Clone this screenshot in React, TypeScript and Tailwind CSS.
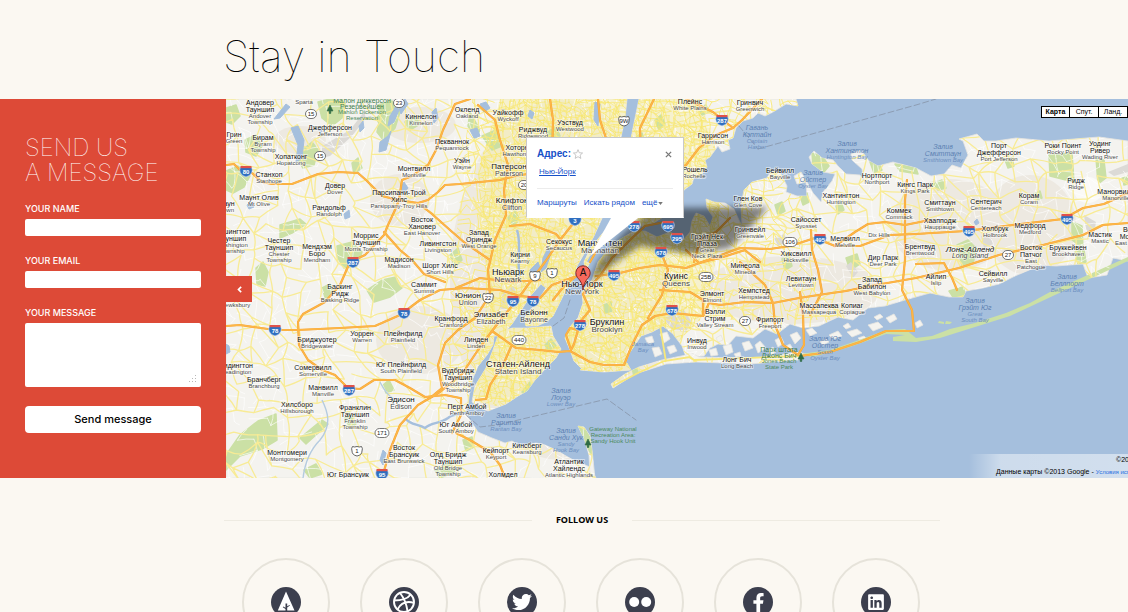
import React from "react";
import { FaTwitter, FaFacebookF, FaLinkedin } from "react-icons/fa";

type Kind = "town" | "city" | "metro" | "water" | "park" | "region";
type Label = [number, number, string, string, Kind?];

const LABELS: Label[] = [
  [260, 102, "Андовер|Тауншип", "Andover|Township"],
  [304, 102, "", "Sparta"],
  [421, 116, "Киннелон", "Kinnelon"],
  [330, 127, "Джефферсон", "Jefferson"],
  [234, 134, "Грин", "Green"],
  [263, 137, "Бирам", "Byram|Township"],
  [291, 156, "Хопатконг", "Hopatcong"],
  [452, 141, "Пекваннок", "Pequannock"],
  [269, 174, "Станхоп", "Stanhope"],
  [414, 168, "Монтвилл", "Montville"],
  [335, 185, "Довер", "Dover"],
  [259, 197, "Маунт Олив", "Mt Olive"],
  [399, 192, "Парсипани-Трой|Хилс", "Parsippany-Troy Hills"],
  [329, 207, "Рандольф", "Randolph"],
  [422, 219, "Восток|Хановер", "East Hanover"],
  [366, 235, "Моррис|Тауншип", "Morris Township"],
  [227, 203, "Таун", "Town"],
  [232, 231, "Вашингтон|Тауншип", "Washington|Township"],
  [279, 240, "Честер|Тауншип", "Chester|Township"],
  [317, 246, "Мендхэм|Боро", "Mendham"],
  [438, 243, "Ливингстон", "Livingston"],
  [399, 259, "Мадисон", "Madison"],
  [440, 265, "Шорт Хилс", "Short Hills"],
  [424, 284, "Саммит", "Summit"],
  [340, 286, "Баскинг|Ридж", "Basking Ridge"],
  [236, 305, "", "Tewksbury"],
  [362, 333, "Уоррен", "Warren"],
  [403, 333, "Плейнфилд", "Plainfield"],
  [451, 318, "Кранфорд", "Cranford"],
  [317, 339, "Бриджуотер", "Bridgewater"],
  [313, 367, "Сомервилл", "Somerville"],
  [401, 364, "Юг Плейнфилд", "South Plainfield"],
  [236, 365, "Ридингтон", "Readington"],
  [264, 379, "Бранчберг", "Branchburg"],
  [323, 387, "Манвилл", "Manville"],
  [401, 399, "Эдисон", "Edison", "city"],
  [297, 404, "Хилсборо", "Hillsborough"],
  [355, 407, "Франклин|Тауншип", "Franklin|Township"],
  [404, 447, "Восток|Брансуик", "East Brunswick"],
  [448, 454, "Олд Бридж|Тауншип", "Old Bridge|Township"],
  [287, 452, "Монтгомери", "Montgomery"],
  [348, 474, "Юг Брансуик", ""],
  [456, 424, "Юг Амбой", "South Amboy"],
  [467, 406, "Перт Амбой", "Perth Amboy"],
  [458, 370, "Вудбридж|Тауншип", "Woodbridge|Township"],
  [467, 109, "Окленд", "Oakland"],
  [508, 112, "Уайкофф", "Wyckoff"],
  [570, 122, "Уэствуд", "Westwood"],
  [533, 129, "Риджвуд", "Ridgewood"],
  [517, 147, "Хоторн", "Hawthorne"],
  [462, 160, "Уэйн", "Wayne"],
  [509, 166, "Патерсон", "Paterson", "city"],
  [512, 200, "Клифтон", "Clifton", "city"],
  [479, 232, "Запад|Ориндж", "West Orange"],
  [559, 241, "Секокус", "Secaucus"],
  [520, 254, "Кирни", "Kearny"],
  [508, 272, "Ньюарк", "Newark", "metro"],
  [600, 243, "Манхэттен", "Manhattan", "metro"],
  [676, 276, "Куинс", "Queens", "metro"],
  [582, 284, "Нью-Йорк", "New York", "metro"],
  [468, 295, "Юнион", "Union", "city"],
  [491, 314, "Элизабет", "Elizabeth", "city"],
  [534, 312, "Бейонн", "Bayonne", "city"],
  [607, 322, "Бруклин", "Brooklyn", "metro"],
  [476, 339, "Линден", "Linden"],
  [518, 364, "Статен-Айленд", "Staten Island", "metro"],
  [643, 344, "", "Jamaica|Bay", "water"],
  [561, 390, "Залив|Лоуэр", "Lower Bay", "water"],
  [506, 415, "Залив|Раритан", "Raritan Bay", "water"],
  [566, 430, "Залив|Санди Хук", "Sandy|Hook Bay", "water"],
  [527, 445, "Кинсберг", "Keansburg"],
  [496, 450, "Кейпорт", "Keyport"],
  [503, 474, "Холмдел", ""],
  [569, 461, "Атлантик|Хайлендс", "Atlantic Highlands"],
  [690, 101, "Плейнс", "White Plains"],
  [750, 102, "Гринвич", "Greenwich"],
  [757, 127, "Гавань|Кэптайн", "Captain|Harbor", "water"],
  [713, 135, "Гаррисон", "Harrison"],
  [847, 143, "Залив|Хантингтон", "Huntington Bay", "water"],
  [687, 169, "Нью-Рошель", "New Rochelle"],
  [780, 170, "Бейвилл", "Bayville"],
  [813, 172, "Залив|Ойстер", "Oyster Bay", "water"],
  [877, 175, "Нортпорт", "Northport"],
  [915, 184, "Кингс Парк", "Kings Park"],
  [748, 198, "Глен Ков", "Glen Cove"],
  [841, 195, "Хантингтон", "Huntington"],
  [899, 210, "Коммек", "Commack"],
  [806, 219, "Сайоссет", "Syosset"],
  [750, 229, "Гринвейл", "Greenvale"],
  [845, 238, "Мелвилл", "Melville"],
  [879, 235, "", "Dix Hills"],
  [707, 236, "Грэйт Нек|Плаза", "Great|Neck Plaza"],
  [796, 253, "Хиксвилл", "Hicksville"],
  [883, 257, "Дир Парк", "Deer Park"],
  [920, 246, "Брентвуд", "Brentwood"],
  [745, 265, "Минеола", "Mineola"],
  [801, 278, "Левитаун", "Levittown"],
  [872, 279, "Запад|Бабилон", "West Babylon"],
  [754, 290, "Хемпстед", "Hempstead"],
  [712, 293, "Элмонт", "Elmont"],
  [715, 311, "Вэлли|Стрим", "Valley Stream"],
  [770, 319, "Фрипорт", "Freeport"],
  [819, 305, "Массапеква", "Massapequa"],
  [852, 305, "Копиаг", "Copiague"],
  [697, 340, "Инвуд", "Inwood"],
  [737, 359, "Лонг Бич", "Long Beach"],
  [779, 349, "Парк штата|Джонс Бич", "Jones Beach|State Park", "park"],
  [825, 338, "Залив Юг|Ойстер", "South|Oyster Bay", "water"],
  [943, 146, "Залив|Смиттаун", "Smithtown Bay", "water"],
  [999, 145, "Порт|Джефферсон", "Port Jefferson"],
  [1063, 145, "Роки Поинт", "Rocky Point"],
  [1100, 143, "Уодинг|Ривер", "Wading River"],
  [1076, 180, "Ридж", "Ridge"],
  [1116, 191, "Манорвилл", "Manorville"],
  [1029, 195, "Корам", "Coram"],
  [940, 202, "Смиттаун", "Smithtown"],
  [986, 201, "Сентерич", "Centereach"],
  [940, 220, "Хаапподж", "Hauppauge"],
  [995, 228, "Холбрук", "Holbrook"],
  [1030, 225, "Медфорд", "Medford"],
  [1100, 234, "Мастик", "Mastic"],
  [1134, 229, "Восток|Моричес", "East Moriches"],
  [970, 249, "Лонг-Айленд", "Long Island", "region"],
  [1031, 247, "Восток|Патчог", "East|Patchogue"],
  [1068, 247, "Бруккейвен", "Brookhaven"],
  [993, 273, "Сейвилл", "Sayville"],
  [936, 276, "Айлип", "Islip"],
  [1067, 276, "Залив|Беллпорт", "Bellport Bay", "water"],
  [975, 300, "Залив|Грэйт Юг", "Great|South Bay", "water"],
  [362, 100, "Малон Диккерсон|Резервейшен", "Mahlon Dickerson|Reservation", "park"],
  [613, 429, "", "Gateway National|Recreation Area:|Sandy Hook Unit", "park"],
];

const INTERSTATES: [number, number, string][] = [
  [246, 171, "80"], [353, 262, "287"], [404, 313, "78"], [275, 330, "78"], [349, 390, "287"],
  [382, 474, "95"], [513, 301, "95"], [533, 301, "78"], [580, 325, "278"], [672, 310, "678"],
  [614, 275, "495"], [634, 226, "278"], [668, 226, "695"], [677, 238, "295"], [661, 252, "678"],
  [722, 120, "287"], [820, 239, "495"], [969, 231, "495"], [1067, 219, "495"], [575, 220, "3"],
];

const OVALS: [number, number, string][] = [
  [311, 114, "15"], [320, 156, "15"], [399, 103, "23"], [382, 433, "171"], [519, 340, "440"],
  [706, 277, "25B"], [790, 242, "106"], [745, 321, "27"], [1008, 255, "27"], [524, 185, "20"],
];

const US_ROUTES: [number, number, string][] = [
  [357, 451, "1"], [535, 276, "9"], [552, 273, "1"], [488, 298, "22"], [624, 121, "9W"],
];

const LAND = [
  "226,99 627,99 625,118 621,137 612,180 604,214 594,236 584,254 577,266 574,278 566,290 561,300 553,316 546,322 537,326 526,326 524,318 532,308 541,296 546,288 541,284 531,295 520,312 512,324 505,332 500,336 494,336 493,345 487,355 478,366 473,378 470,390 468,404 466,412 470,420 478,432 492,438 505,443 512,441 520,446 536,443 545,445 556,450 566,456 577,462 590,467 596,478 226,478",
  "499,333 512,328 528,328 551,326 553,336 561,349 556,358 546,368 535,380 527,391 518,396 506,404 488,411 480,408 472,402 475,386 486,368 493,350",
  "639,99 796,99 798,106 786,104 773,112 765,116 758,113 753,118 743,121 736,128 733,138 728,140 730,149 722,152 718,146 710,157 705,160 707,167 699,178 694,177 692,184 684,190 678,204 668,214 655,222 645,227 634,224 625,226 615,234 600,247 590,262 586,270 584,262 590,249 602,234 617,217 624,190 629,150 633,128",
  "598,262 606,252 619,240 634,231 645,231 657,237 670,232 684,239 690,232 692,221 696,213 704,216 710,226 713,217 707,208 706,199 714,202 725,203 734,209 739,220 742,226 741,205 744,190 752,182 767,178 771,171 780,172 787,186 786,192 797,196 807,196 806,182 797,184 794,176 801,172 807,182 813,193 821,202 823,192 832,181 835,174 823,172 812,164 809,157 814,151 822,158 833,160 838,166 846,174 860,175 864,181 862,169 852,160 851,154 861,150 869,161 878,166 893,162 916,168 931,176 944,174 952,165 961,168 968,155 963,141 959,139 977,134 984,141 996,141 1016,138 1049,141 1099,137 1128,141 1128,261 1113,258 1107,275 1088,278 1083,264 1056,266 1041,265 1015,276 999,284 983,288 966,291 963,297 949,297 930,293 905,300 885,306 868,308 853,320 838,317 819,326 803,328 790,324 777,334 765,329 753,338 736,336 728,345 718,344 710,348 704,356 686,357 682,346 673,334 663,326 652,332 641,336 630,352 624,367 605,370 582,369 574,361 570,350 565,338 569,328 578,318 583,303 582,292 592,280",
  "611,384 625,374 639,367 662,360 686,355 690,352 699,357 740,358 765,357 798,352 806,354 798,360 750,364 696,362 666,364 635,374 613,388",
  "578,426 584,427 590,436 592,450 595,478 590,478 589,455 584,438",
  "585,365 627,363 631,370 604,372 580,370",
];

const ISLETS = [
  "645,338 652,336 654,342 648,344", "660,334 667,332 670,339 664,343", "652,348 659,347 662,354 655,357", "667,347 674,345 677,351 670,354",
  "709,350 716,348 718,355 711,356", "723,346 731,344 733,352 726,355", "742,343 749,341 753,348 745,351", "755,345 760,341 766,348 758,353",
  "775,340 781,337 784,343 778,347", "790,335 797,332 801,338 795,344", "806,330 812,328 817,333 810,336", "829,335 838,331 842,336 833,339",
  "847,332 857,329 862,333 852,337", "868,325 878,322 883,327 873,331", "886,318 894,314 897,319 890,323", "915,323 920,320 923,325 917,328",
  "716,338 721,335 723,340 718,342", "734,354 740,352 741,356 736,357", "768,350 773,347 776,352 771,355", "786,346 790,344 793,349 788,351",
  "820,342 826,339 829,342 823,345", "843,326 848,323 851,327 846,329", "858,338 864,336 866,338 860,340", "874,317 880,314 883,317 877,320",
];

const BARRIERS = [
  "800,354 830,350 862,339 886,330 905,329 916,338 932,336 950,329 975,323 1006,313 1030,303 1050,292 1070,283 1090,274 1128,257 1128,261 1094,277 1070,288 1040,302 1010,316 975,327 940,338 916,342 893,341 893,337 905,335 886,334 850,347 812,357",
  "939,321 944,322 944,324 938,323", "946,321 952,322 950,324 945,324",
];

const PARKS = [
  "226,171 238,166 250,176 244,187 233,193 226,190", "226,108 236,105 240,116 232,124 226,122", "245,140 256,135 262,146 256,156 246,152",
  "318,102 330,99 345,103 342,118 332,126 322,118", "378,105 392,101 400,112 395,128 384,141 377,132 380,118", "300,152 312,142 318,150 314,165 303,168 298,160",
  "352,163 358,158 362,168 354,174", "376,118 382,113 388,120 382,128", "405,122 415,116 420,124 410,130", "337,246 352,242 362,252 357,266 344,268 338,258",
  "280,225 300,219 306,224 292,233 280,238", "256,268 263,262 268,272 265,286 257,284", "367,290 382,280 396,277 402,288 390,297 374,302", "322,288 330,284 334,292 326,300",
  "226,455 240,435 258,421 276,414 277,440 262,449 240,456 226,470", "300,438 322,420 328,424 306,444", "345,418 350,412 356,424 350,428", "304,470 316,464 322,474 310,478",
  "383,385 389,380 394,390 386,393", "435,470 450,462 455,472 440,478", "463,440 472,437 474,447 466,451", "450,255 458,248 462,260 455,267",
  "470,112 480,130 476,138 468,126", "482,136 496,130 502,146 492,150", "548,132 556,126 560,136 552,142", "508,218 514,210 520,220 512,226",
  "522,392 530,382 538,385 527,398", "545,345 551,339 556,346 549,352", "629,352 634,350 640,374 634,377", "604,305 611,302 612,311 605,313", "672,280 679,277 684,284 676,287",
  "812,153 823,157 829,166 824,172 813,167", "870,162 878,161 882,170 874,173", "895,164 916,168 918,174 900,171", "724,190 731,194 729,202 722,201",
  "775,205 782,202 785,211 778,215", "800,196 807,193 809,202 803,205", "836,206 841,202 844,210 838,214", "782,259 789,255 792,266 785,270", "846,258 857,254 860,264 850,270",
  "957,245 968,240 977,249 973,263 962,266", "1049,155 1072,153 1074,182 1050,176", "1096,158 1104,160 1106,178 1098,184", "1072,222 1082,226 1083,248 1072,240", "1122,178 1128,176 1128,184 1124,185",
  "963,287 966,297 953,297 949,291", "1034,194 1040,191 1042,198 1036,200", "578,426 584,427 591,440 592,456 588,448", "894,338 910,337 914,342 896,342", "1075,252 1084,250 1086,262 1078,264",
  "618,240 622,230 625,232 621,244", "637,136 642,133 645,142 639,146", "655,120 661,115 665,124 659,130", "698,108 706,105 709,112 702,115", "934,184 942,180 946,188 938,190", "1005,160 1012,158 1014,166 1008,168",
];

const LAKES = [
  "291,128 298,126 304,140 302,158 296,162 298,145", "274,119 286,104 290,107 280,118", "390,116 396,106 399,110 394,122 388,126", "398,105 405,99 408,104 401,114", "380,142 388,136 391,131 386,150 379,152",
  "401,187 404,182 408,188 403,194", "432,112 436,108 438,118 434,123", "470,130 477,128 480,136 474,138", "226,344 229,346 230,352 226,354", "247,205 250,202 254,207 249,209", "359,126 363,121 364,128 360,132",
  "344,214 349,210 350,217 345,219", "480,104 486,102 490,108 484,112", "556,143 562,140 565,146 558,149", "595,102 600,104 598,126 594,120", "530,110 534,113 532,119 528,116", "380,460 383,450 386,453 383,465",
  "974,222 977,219 979,223 976,225", "318,130 321,126 322,132", "543,258 548,248 551,253 546,268 541,272", "530,270 538,262 540,268 532,280", "606,240 612,228 616,226 610,240",
];

const AIRFIELDS = [
  "322,146 350,130 364,112 366,118 352,136 330,156 322,158", "503,292 514,286 517,298 508,312 500,308", "664,318 684,310 691,321 686,332 672,330", "851,262 858,272 853,278 846,266",
  "1108,172 1128,164 1128,172 1114,176", "981,236 990,234 993,244 984,248", "774,238 784,234 788,242 778,246", "1084,215 1096,222 1094,234 1086,230",
];

const HIGHWAYS = [
  "226,165 234,164 240,170 252,173 262,182 272,184 292,184 318,174 338,172 358,173 366,180 372,186 382,196 398,200 418,203 428,200 438,192 445,185 460,184 480,182 500,180 515,176 540,172 580,190 612,200",
  "470,99 455,104 450,115 443,130 436,150 428,165 412,176 402,180 399,200 395,210 388,225 384,235 365,255 350,262 340,285 325,302 303,314 298,322 299,345 308,360 322,370 335,375 348,388 360,389 374,380 395,380 410,388 425,397 445,395 460,398",
  "384,232 400,250 412,260 424,274 445,282", "418,203 432,214 450,230 465,243 490,260",
  "226,326 240,325 275,330 297,330 340,328 375,326 400,315 420,300 440,290 465,288 500,290 520,296 540,298 552,285 574,277",
  "382,478 390,450 400,425 418,405 440,392 462,374 478,350 492,331 502,318 517,300 530,282 545,262 560,240 580,215 600,180 610,150 600,120 598,99",
  "430,398 442,388 438,365 445,343 458,330 475,318 490,295 488,270 495,240 506,215 504,190 508,165 500,140 495,120 478,105",
  "492,331 516,348 540,350 558,352 570,351 590,362 604,365 624,365 632,345 642,325 655,316 672,313 703,316 709,303 720,305 745,302 773,303 799,298 825,294 846,291 870,286 916,278 959,268 999,255 1043,245 1083,235 1103,225 1128,223",
  "476,400 486,399 490,385 503,365 511,347", "571,350 566,335 570,328 578,330 574,344 571,350", "575,328 590,310 583,294 600,276 612,258 630,240 645,226 665,222",
  "596,276 620,273 640,268 660,265 686,268 702,262 740,248 770,249 790,246 815,238 835,246 860,246 890,235 916,234 966,231 1013,225 1063,219 1083,208 1104,204 1128,193",
  "686,250 699,263 720,258 745,250 752,256 760,262", "835,246 855,232 868,224 885,222 905,225 930,220",
  "811,230 812,250 818,270 822,292 810,315", "740,262 765,285 773,303 775,325 783,345 798,355 804,345 803,315 800,292", "800,356 830,352 860,342 886,331 914,331 912,310 902,290 905,260 905,200 907,180",
  "686,99 713,112 733,128 742,120 762,99", "686,165 699,148 716,135 733,128", "625,222 650,190 670,175 686,165", "661,252 668,270 662,295 648,318", "654,99 640,128 641,160 635,200 630,228",
  "550,99 553,120 552,160 560,190 572,215", "456,433 470,440 490,452 500,465 505,478", "510,226 530,224 556,234 566,246", "590,262 604,238 622,216", "461,398 461,415 452,433", "456,288 480,278 512,282 540,280",
  "916,264 944,263 952,278 957,290", "660,290 690,292 703,300 703,316", "553,300 565,285 578,275", "694,262 700,240 716,232 730,218",
];

const BORDERS = ["758,149 916,105 936,99", "466,415 480,427 497,425 607,399 636,420", "553,326 564,318 570,300", "739,126 758,149"];

function seeded(seed: number) {
  let s = seed;
  return () => {
    s = (s * 1664525 + 1013904223) % 4294967296;
    return s / 4294967296;
  };
}

/** Builds a loose mesh of local streets: jittered grid nodes joined to their neighbours. */
function streets(x0: number, y0: number, x1: number, y1: number, step: number, keep: number, seed: number) {
  const rnd = seeded(seed);
  const cols = Math.ceil((x1 - x0) / step) + 1;
  const rows = Math.ceil((y1 - y0) / step) + 1;
  const pts: [number, number][][] = [];
  for (let r = 0; r < rows; r++) {
    pts.push([]);
    for (let c = 0; c < cols; c++) {
      pts[r].push([x0 + c * step + (rnd() - 0.5) * step * 0.9, y0 + r * step + (rnd() - 0.5) * step * 0.9]);
    }
  }
  let d = "";
  const join = (a: [number, number], b: [number, number]) => {
    const mx = (a[0] + b[0]) / 2 + (rnd() - 0.5) * step * 0.3;
    const my = (a[1] + b[1]) / 2 + (rnd() - 0.5) * step * 0.3;
    d += `M${a[0].toFixed(1)} ${a[1].toFixed(1)}Q${mx.toFixed(1)} ${my.toFixed(1)} ${b[0].toFixed(1)} ${b[1].toFixed(1)}`;
  };
  for (let r = 0; r < rows; r++) {
    for (let c = 0; c < cols; c++) {
      if (c + 1 < cols && rnd() < keep) join(pts[r][c], pts[r][c + 1]);
      if (r + 1 < rows && rnd() < keep) join(pts[r][c], pts[r + 1][c]);
      if (r + 1 < rows && c + 1 < cols && rnd() < keep * 0.3) join(pts[r][c], pts[r + 1][c + 1]);
    }
  }
  return d;
}

const RURAL = streets(220, 92, 1140, 486, 17, 0.78, 7);
const LANES = streets(220, 92, 1140, 486, 11, 0.4, 21);
const SUBURB = streets(440, 92, 850, 420, 9, 0.66, 11);
const DENSE = streets(480, 92, 720, 420, 5, 0.7, 5);

const SIZES: Record<Kind, [number, number, number]> = {
  town: [7, 6, 7],
  city: [8, 7, 8],
  metro: [9, 8, 8],
  water: [7, 6, 7],
  park: [7, 6, 6],
  region: [8, 7, 7],
};

function PlaceLabel({ label }: { label: Label }) {
  const [x, y, local, latin, kind = "town"] = label;
  const [big, small, leading] = SIZES[kind];
  const top = local ? local.split("|") : [];
  const bottom = latin ? latin.split("|") : [];
  const tone = kind === "water" ? "#5c7fb2" : kind === "park" ? "#3e7d50" : "#111111";
  const soft = kind === "water" ? "#6d8fc0" : kind === "park" ? "#4c8a5c" : "#4a4a4a";
  const slant = kind === "water" || kind === "region" ? "italic" : "normal";
  const halo = kind === "water" || kind === "park" ? "none" : "#ffffff";
  return (
    <g textAnchor="middle" fontStyle={slant} stroke={halo} strokeWidth={1.5} strokeOpacity={0.6} paintOrder="stroke">
      {top.map((t, i) => (
        <text key={"t" + i} x={x} y={y + 3 + i * leading} fontSize={big} fill={tone}>
          {t}
        </text>
      ))}
      {bottom.map((t, i) => (
        <text key={"b" + i} x={x} y={y + 2 + top.length * leading + i * 6} fontSize={small} fill={soft}>
          {t}
        </text>
      ))}
    </g>
  );
}

function Tree({ x, y }: { x: number; y: number }) {
  return <path d={`M${x} ${y - 4}l3 6h-2.2v2.4h-1.6v-2.4h-2.2z`} fill="#2f6b45" stroke="#2f6b45" strokeWidth={0.6} />;
}

function MapCanvas() {
  return (
    <svg
      viewBox="226 99 902 379"
      preserveAspectRatio="xMinYMin slice"
      className="absolute inset-0 h-full w-full font-['Liberation_Sans',sans-serif]"
      role="img"
      aria-label="Нью-Йорк"
    >
      <defs>
        <clipPath id="land">
          {LAND.map((p) => <polygon key={p} points={p} />)}
        </clipPath>
        <clipPath id="urban">
          <path d="M500 99H700L716 150 720 240 704 316 680 340 560 420 470 400 482 330 490 290 482 240 478 170z" />
        </clipPath>
        <clipPath id="suburb">
          <path d="M470 99H800V260L850 320H690L560 420 440 400 450 300z" />
        </clipPath>
        <filter id="soft" x="-20%" y="-20%" width="140%" height="140%">
          <feGaussianBlur stdDeviation="3" />
        </filter>
      </defs>
      <rect x="226" y="99" width="902" height="379" fill="#a5bfdd" />
      <g fill="#f4f3ef" stroke="#e6e4df" strokeWidth={0.8} strokeLinejoin="round">
        {LAND.map((p) => <polygon key={p} points={p} />)}
        {ISLETS.map((p) => <polygon key={p} points={p} />)}
      </g>
      <g fill="#cbe0a5">
        {BARRIERS.map((p) => <polygon key={p} points={p} />)}
      </g>
      <g clipPath="url(#land)">
        <g fill="#ede9e1">
          <ellipse cx="300" cy="140" rx="26" ry="14" />
          <ellipse cx="420" cy="125" rx="36" ry="18" />
          <ellipse cx="400" cy="200" rx="30" ry="26" />
          <ellipse cx="420" cy="340" rx="44" ry="34" />
          <ellipse cx="790" cy="290" rx="90" ry="34" />
          <ellipse cx="560" cy="280" rx="110" ry="180" />
          <ellipse cx="950" cy="225" rx="60" ry="46" />
          <ellipse cx="1030" cy="225" rx="46" ry="50" />
        </g>
        <path clipPath="url(#urban)" d="M440 92H740V430H440z" fill="#f8f0a6" opacity="0.45" />
        <g fill="#cbe0a5">
          {PARKS.map((p) => <polygon key={p} points={p} strokeLinejoin="round" stroke="#cbe0a5" strokeWidth={1.5} />)}
        </g>
        <g fill="#dcdad6">
          {AIRFIELDS.map((p) => <polygon key={p} points={p} />)}
        </g>
        <ellipse cx="1088" cy="190" rx="14" ry="13" fill="#fbfaf7" />
        <g fill="none" strokeLinecap="round">
          <path d={LANES} stroke="#ffffff" strokeWidth={0.8} opacity="0.8" />
          <path d={RURAL} stroke="#f8eb95" strokeWidth={1.3} />
          <path d={SUBURB} clipPath="url(#suburb)" stroke="#f9ea80" strokeWidth={1} />
          <path d={DENSE} clipPath="url(#urban)" stroke="#f7e770" strokeWidth={0.7} />
        </g>
      </g>
      <g fill="#a5bfdd" stroke="#a5bfdd" strokeWidth={1} strokeLinejoin="round">
        {LAKES.map((p) => <polygon key={p} points={p} />)}
      </g>
      <path
        d="M470 411C462 416 455 412 448 418 440 424 432 422 425 428 418 424 410 425 405 418M520 276C516 262 522 245 517 230M588 262C600 240 610 225 618 210"
        fill="none"
        stroke="#a5bfdd"
        strokeWidth={2.4}
      />
      <path
        d="M394 399C388 396 384 390 380 382M322 400C328 412 332 425 320 440 310 450 305 462 303 478"
        fill="none"
        stroke="#b4cbe0"
        strokeWidth={1.4}
      />
      <path d="M689 357L694 360 800 356M613 386L640 372 664 361 690 357M660 325L666 362" fill="none" stroke="#f7e77a" strokeWidth={1.8} />
      <g fill="none" strokeLinejoin="round" strokeLinecap="round">
        {HIGHWAYS.map((p) => <polyline key={p} points={p} stroke="#f6a534" strokeWidth={2.2} />)}
        {HIGHWAYS.map((p) => <polyline key={p} points={p} stroke="#fdb648" strokeWidth={1.4} />)}
        {BORDERS.map((p) => <polyline key={p} points={p} stroke="#8d9db3" strokeWidth={1} strokeDasharray="6 3" />)}
      </g>
      <polygon
        points="588,284 598,262 622,234 652,208 768,207 752,226 730,248 690,254 640,246 616,262"
        fill="#000000"
        opacity="0.48"
        filter="url(#soft)"
      />
      {OVALS.map(([x, y, n]) => (
        <g key={n + x}>
          <rect x={x - (n.length > 2 ? 7 : 5.5)} y={y - 4.5} width={n.length > 2 ? 14 : 11} height="9" rx="4.5" fill="#fff" stroke="#555" strokeWidth={0.8} />
          <text x={x} y={y + 2} fontSize={6} textAnchor="middle" fill="#222">{n}</text>
        </g>
      ))}
      {US_ROUTES.map(([x, y, n]) => (
        <g key={n + x}>
          <path d={`M${x - 4.5} ${y - 4.5}q2 1 4.5 0q2.500 1 4.500 0q1.500 2 .5 4.500q0 4-5 5q-5-1-5-5q-1-2.500.5-4.500z`} fill="#fff" stroke="#555" strokeWidth={0.9} />
          <text x={x} y={y + 2} fontSize={6} textAnchor="middle" fill="#222">{n}</text>
        </g>
      ))}
      {INTERSTATES.map(([x, y, n]) => (
        <g key={n + x + "-" + y}>
          <path d={`M${x - 5.5} ${y - 4}h11q1.500 3 .3 5.500q-1.500 3.500-5.800 4.500q-4.300-1-5.800-4.500q-1.200-2.500.3-5.500z`} fill="#2f6fc0" stroke="#dfe8f5" strokeWidth={0.6} />
          <path d={`M${x - 5.5} ${y - 5}h11v2.200h-11z`} fill="#e0524a" />
          <text x={x} y={y + 3} fontSize={6} fontWeight="bold" textAnchor="middle" fill="#fff">{n}</text>
        </g>
      ))}
      {LABELS.map((l) => <PlaceLabel key={l[0] + "-" + l[1]} label={l} />)}
      <Tree x={330} y={109} />
      <Tree x={588} y={443} />
      <Tree x={801} y={357} />
      <polygon points="611,218 638,218 590,256" fill="#ffffff" />
      <path d="M583 290c-.6-7-3-9.500-5.600-12.500a7.200 7.200 0 1 1 11.200 0c-2.600 3-5 5.500-5.600 12.500z" fill="#f8695c" stroke="#7d1c16" strokeWidth={0.9} />
      <text x="583" y="276" fontSize={10} textAnchor="middle" fill="#111">A</text>
    </svg>
  );
}

function InfoWindow() {
  return (
    <div className="absolute left-[300px] top-[38px] w-[158px] border border-[#c9c9c9] border-b-white bg-white px-[10px] pb-2 pt-2 font-['Liberation_Sans',sans-serif] text-[8px] leading-[12px] text-[#1550c8]">
      <div className="flex items-center">
        <h3 className="text-[10px] font-bold leading-[16px]">Адрес:</h3>
        <svg viewBox="0 0 12 12" className="ml-0.5 size-[10px]" fill="none" stroke="#b5b5b5" strokeWidth="0.9" aria-hidden="true">
          <path d="M6 .8l1.500 3.700 4 .3-3 2.600.9 3.900L6 9.200l-3.400 2.100.9-3.900-3-2.600 4-.3z" />
        </svg>
        <button type="button" aria-label="Закрыть" className="ml-auto mr-px">
          <svg viewBox="0 0 8 8" className="size-[7px]" stroke="#777" strokeWidth="1.500" aria-hidden="true">
            <path d="M1 1l6 6M7 1L1 7" />
          </svg>
        </button>
      </div>
      <a href="#address" className="ml-0.5 mt-1 inline-block underline">Нью-Йорк</a>
      <div className="mt-2.5 flex gap-[7px] border-t border-[#ececec] pt-2">
        <a href="#routes">Маршруты</a>
        <a href="#nearby">Искать рядом</a>
        <a href="#more" className="flex items-center gap-px">
          ещё
          <svg viewBox="0 0 6 4" className="h-[3px] w-[5px]" fill="#777" aria-hidden="true"><path d="M0 0h6L3 4z" /></svg>
        </a>
      </div>
    </div>
  );
}

function MapPanel() {
  const types = ["Карта", "Спут.", "Ланд."];
  return (
    <div className="relative min-w-0 flex-1 overflow-hidden bg-[#a5bfdd]">
      <MapCanvas />
      <InfoWindow />
      <button type="button" aria-label="Collapse" className="absolute left-0 top-[177px] flex h-[26px] w-[26px] items-center justify-center bg-[#dd4a37]">
        <svg viewBox="0 0 6 8" className="h-[7px] w-[5px]" fill="none" stroke="#fff" strokeWidth="2" aria-hidden="true">
          <path d="M5 .8L1.800 4 5 7.200" />
        </svg>
      </button>
      <div className="absolute -right-px top-[7px] flex border border-black bg-black font-['Liberation_Sans',sans-serif] text-[7px] leading-[10px] text-black">
        {types.map((t, i) => (
          <button key={t} type="button" className={i === 0 ? "w-[28px] border-r border-black bg-white font-bold" : "w-[29px] border-r border-black bg-white"}>
            {t}
          </button>
        ))}
      </div>
      <div className="absolute bottom-0 right-0 w-[159px] overflow-hidden whitespace-nowrap bg-linear-to-r from-white/0 via-white/45 via-20% to-white/50 pl-[27px] font-['Liberation_Sans',sans-serif] text-[7px] leading-[12px] text-black">
        <p className="pl-[120px]">©2013 Google</p>
        <p>
          Данные карты ©2013 Google - <a href="#terms" className="text-[6px] text-[#2a6fe0]">Условия использования</a>
        </p>
      </div>
    </div>
  );
}

const LABEL = "block text-[9px] font-medium leading-[10px]";
const FIELD = "mt-[5px] block w-full rounded-xs bg-white px-2 text-[10px] text-black outline-none";

function ContactForm() {
  return (
    <form
      onSubmit={(e) => e.preventDefault()}
      className="w-[226px] shrink-0 bg-[#dd4a37] pb-[45px] pl-[25px] pr-[25px] pt-[36px] font-['Inter',sans-serif] text-white"
    >
      <h2 className="text-[24px] font-thin leading-[25px]">
        SEND US
        <br />A MESSAGE
      </h2>
      <div className="mt-[19px]">
        <label htmlFor="name" className={LABEL}>YOUR NAME</label>
        <input id="name" type="text" className={FIELD + " h-[17px]"} />
      </div>
      <div className="mt-5">
        <label htmlFor="email" className={LABEL}>YOUR EMAIL</label>
        <input id="email" type="email" className={FIELD + " h-[17px]"} />
      </div>
      <div className="mt-5">
        <label htmlFor="message" className={LABEL}>YOUR MESSAGE</label>
        <div className="relative">
          <textarea id="message" className={FIELD + " h-[64px] resize-none"} />
          <svg viewBox="0 0 8 8" className="absolute bottom-1 right-1 size-2" fill="#b9b9b9" aria-hidden="true">
            <path d="M6 0h1v1h-1zM3 3h1v1h-1zM6 3h1v1h-1zM0 6h1v1h-1zM3 6h1v1h-1zM6 6h1v1h-1z" />
          </svg>
        </div>
      </div>
      <button type="submit" className="mt-[19px] block h-[27px] w-full rounded-sm bg-white text-[11px] font-medium text-black">
        Send message
      </button>
    </form>
  );
}

function DarkDisc({ children }: { children: React.ReactNode }) {
  return <span className="flex size-[30px] items-center justify-center rounded-full bg-[#3c3f4e] text-white">{children}</span>;
}

const SOCIAL: { name: string; icon: React.ReactNode }[] = [
  {
    name: "Forrst",
    icon: (
      <svg viewBox="0 0 30 30" className="size-[30px]" aria-hidden="true">
        <path d="M15 4.500L23.500 23.500H16.200V20.500L19 18.600 18.600 17.900 16.200 19.300V16.500H14.500V20.800L12.200 19.500 11.800 20.200 14.500 22V23.500H6.800z" fill="#fff" />
      </svg>
    ),
  },
  {
    name: "Dribbble",
    icon: (
      <svg viewBox="0 0 30 30" className="size-[30px]" fill="none" stroke="#fff" strokeWidth="1.900" aria-hidden="true">
        <circle cx="15" cy="15" r="10" />
        <path d="M11 6C15 11 17.500 17 18.500 24M5 13.500C12 13.500 18 12.500 21.500 7.800M8.500 22.500C11.500 16.500 17.500 13.800 25 15.800" />
      </svg>
    ),
  },
  { name: "Twitter", icon: <FaTwitter className="size-5" /> },
  {
    name: "Flickr",
    icon: (
      <svg viewBox="0 0 30 30" className="size-[30px]" fill="#fff" aria-hidden="true">
        <circle cx="9.200" cy="15" r="5" />
        <circle cx="21.200" cy="15" r="5" />
      </svg>
    ),
  },
  { name: "Facebook", icon: <FaFacebookF className="size-[19px]" /> },
  { name: "LinkedIn", icon: <FaLinkedin className="size-[18px]" /> },
];

export default function App() {
  return (
    <div className="h-screen overflow-x-hidden overflow-y-hidden bg-[#fbf8f2] text-black">
      <header className="px-[223px] pb-[15px] pt-[28px]">
        <h1 className="whitespace-nowrap font-['Inter',sans-serif] text-[43px] font-thin leading-[56px] text-black">Stay in Touch</h1>
      </header>
      <section className="flex">
        <ContactForm />
        <MapPanel />
      </section>
      <footer className="ml-[224px] mr-[188px] pt-9">
        <div className="flex items-center gap-6">
          <span className="h-px flex-1 bg-[#eeebe2]" />
          <h2 className="font-['Open_Sans',sans-serif] text-[9px] font-bold leading-[12px]">FOLLOW US</h2>
          <span className="h-px flex-1 bg-[#eeebe2]" />
        </div>
        <nav className="mt-8 flex gap-[30px] pl-[18px]">
          {SOCIAL.map((s) => (
            <a key={s.name} href={"#" + s.name.toLowerCase()} aria-label={s.name} className="flex size-[88px] shrink-0 items-center justify-center rounded-full border-2 border-[#e6e3da]">
              <DarkDisc>{s.icon}</DarkDisc>
            </a>
          ))}
        </nav>
      </footer>
    </div>
  );
}
